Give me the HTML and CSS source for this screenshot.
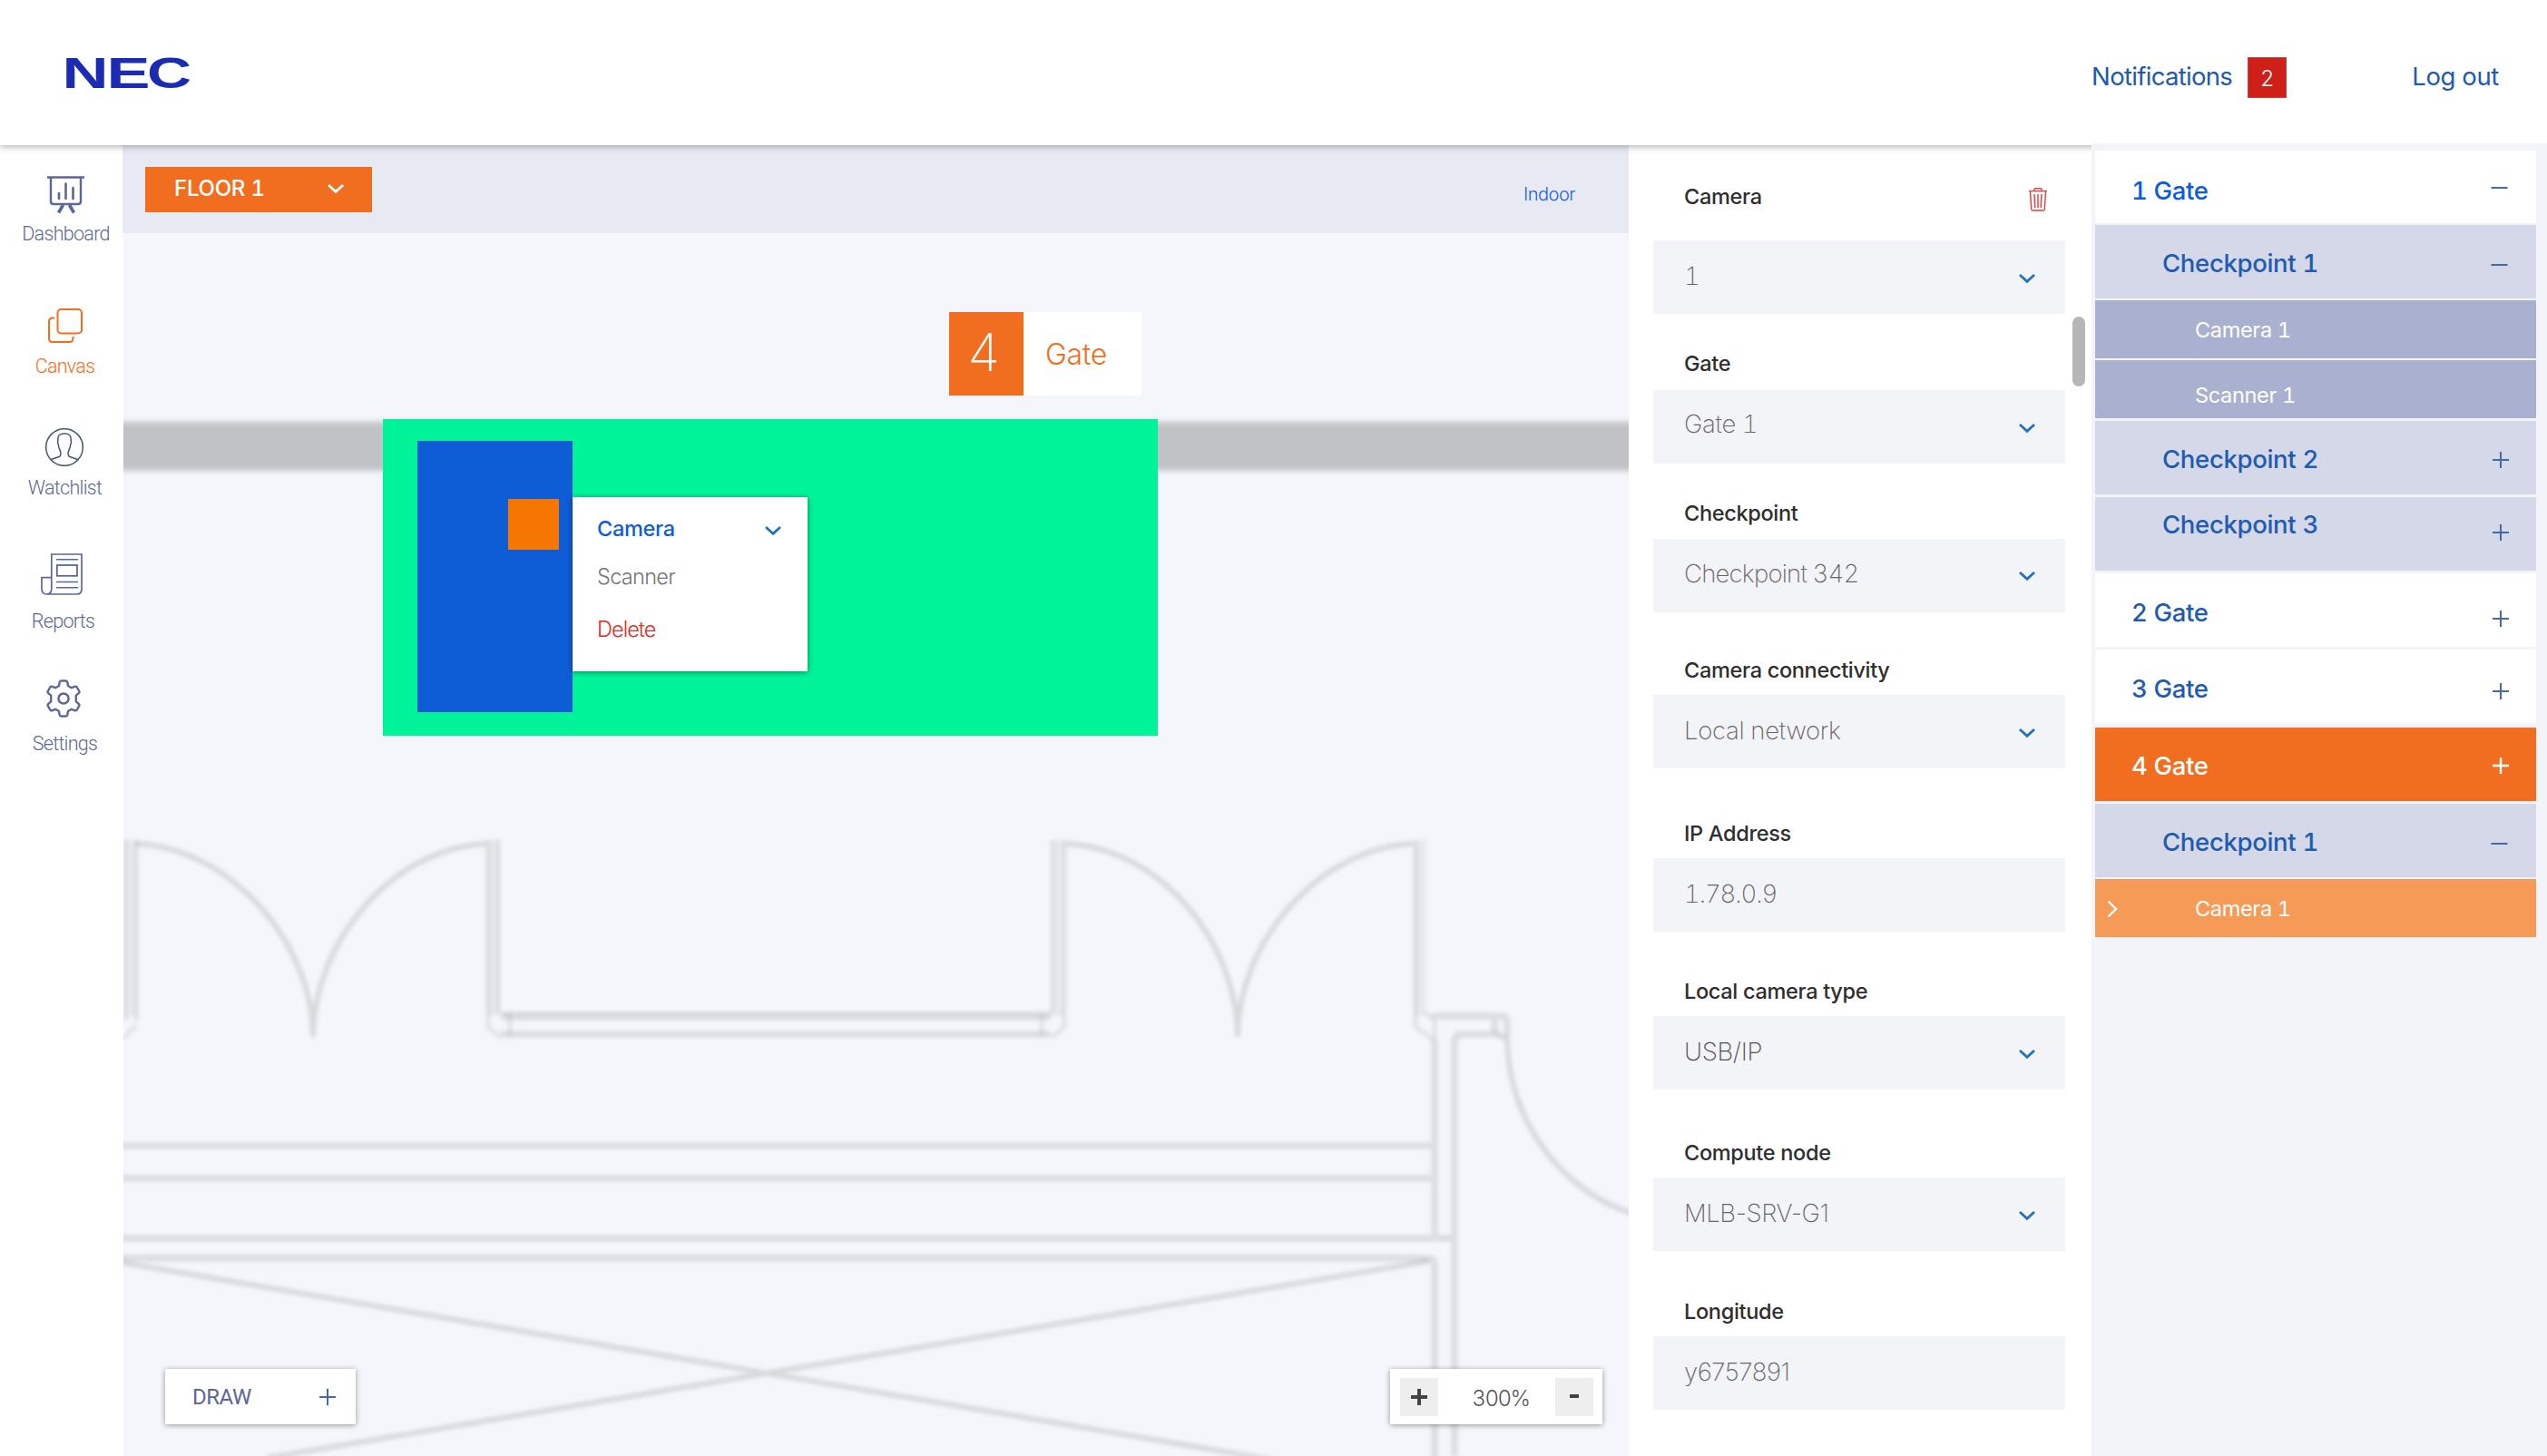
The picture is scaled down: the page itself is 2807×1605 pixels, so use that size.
FILE: index.html
```html
<!DOCTYPE html>
<html lang="en">
<head>
<meta charset="utf-8">
<title>NEC – Canvas</title>
<link rel="stylesheet" href="styles.css">
</head>
<body>
<svg class="sprite" aria-hidden="true">
  <symbol id="chevron" viewBox="0 0 20 12"><path d="M2 2l8 7.4L18 2"/></symbol>
  <symbol id="plus" viewBox="0 0 20 20"><path d="M10 1v18M1 10h18"/></symbol>
  <symbol id="minus" viewBox="0 0 20 20"><path d="M.5 10h18"/></symbol>
</svg>
<div class="app">
  <header class="header">
    <svg class="logo" viewBox="0 0 140 44" role="img" aria-label="NEC">
      <text x="-4.500" y="38.500" textLength="51" lengthAdjust="spacingAndGlyphs">N</text>
      <text x="44.500" y="38.500" textLength="48" lengthAdjust="spacingAndGlyphs">E</text>
      <text x="89" y="38.500" textLength="49" lengthAdjust="spacingAndGlyphs">C</text>
    </svg>
    <nav class="account">
      <a class="account-link notifications">Notifications</a>
      <span class="count">2</span>
      <a class="account-link logout">Log out</a>
    </nav>
  </header>

  <nav class="sidebar">
    <a class="nav-item">
      <svg class="ico" width="42" height="42" viewBox="0 0 42 42"><path d="M0 1.5h41M4 2v26q0 3 3 3h27q3 0 3-3V2" stroke-width="2.4"/><path d="M13 19v6M20.500 8.500v16.500M28.500 13v12" stroke-width="2.600" stroke-linecap="round"/><path d="M17.500 32l-5 8.500M24.500 32l5 8.500" stroke-width="3.600"/></svg>
      <span class="nav-label dash">Dashboard</span>
    </a>
    <a class="nav-item active">
      <svg class="ico" width="38" height="38" viewBox="0 0 38 38"><rect x="10.500" y="1" width="26.500" height="26.500" rx="4" stroke-width="2"/><path d="M7 10.500H5q-4 0-4 4V33q0 4 4 4h18.500q4 0 4-4v-2" stroke-width="2"/></svg>
      <span class="nav-label">Canvas</span>
    </a>
    <a class="nav-item watch">
      <svg class="ico person" width="42" height="42" viewBox="0 0 42 42"><circle cx="21" cy="21" r="20.300"/><path d="M6.500 34.500l8.500-3q2-1 2-3.500 0-2.500-1.500-5-1-2-1.200-5l-.8-2 .4-4Q13.300 6 21 6t7.100 6l.4 4-.8 2q-.2 3-1.200 5Q25 25.500 25 28q0 2.500 2 3.500l8.500 3"/></svg>
      <span class="nav-label">Watchlist</span>
    </a>
    <a class="nav-item reports">
      <svg class="ico" width="46" height="46" viewBox="0 0 46 46"><path d="M11.800 39V1H45v38q0 6-5 6H6.500Q1 45 1 39V26.700h10.800M11.800 39q0 6-5.300 6" stroke-width="1.700"/><path d="M17 6.700h24M17 31.500h24M17 37.700h24" stroke-width="1.500"/><rect x="17.800" y="13" width="22.200" height="11.800" stroke-width="1.800"/></svg>
      <span class="nav-label">Reports</span>
    </a>
    <a class="nav-item settings">
      <svg class="ico" width="42" height="42" viewBox="0 0 42 42"><path d="M16.600 3.200Q17 1.500 18.500 1.500h5q1.500 0 1.900 1.700l.6 3.800 3.800 2.200 3.500-1.400q1.600-.6 2.400.7l2.500 4.300q.7 1.300-.5 2.400l-2.900 2.400v6.800l2.900 2.400q1.200 1.100.5 2.400l-2.500 4.300q-.8 1.300-2.400.7l-3.500-1.400-3.800 2.200-.6 3.800q-.4 1.700-1.900 1.700h-5q-1.500 0-1.900-1.700L16 35l-3.800-2.200-3.500 1.400q-1.600.6-2.400-.7l-2.500-4.300q-.7-1.300.5-2.400l2.900-2.400v-6.800l-2.900-2.400q-1.200-1.100-.5-2.400l2.500-4.300q.8-1.300 2.400-.7l3.500 1.400L16 7z" stroke-width="2.400" stroke-linejoin="round"/><circle cx="21" cy="21" r="5.600" stroke-width="2.500"/></svg>
      <span class="nav-label">Settings</span>
    </a>
  </nav>

  <main class="stage">
    <div class="toolbar">
      <button class="floor">FLOOR 1<svg class="chev" width="20" height="12"><use href="#chevron"/></svg></button>
      <a class="indoor">Indoor</a>
    </div>
    <div class="canvas">
      <svg class="plan" viewBox="135 257 1660 1348" aria-hidden="true">
        <path class="wall-solid" d="M120 492h1700"/>
        <g class="lines">
          <path d="M120 1263h1461M120 1299h1461M120 1365h1483M120 1387h1455q6 0 6 7v230M1581 1145v220M1603 1605v-457q0-8 8-8h40"/>
          <path d="M552 1140h606M552 1121h606" />
          <path class="thin" d="M552 1117h606"/>
          <path class="post" d="M144 926v194M543.500 926v194M1166.500 926v194M1565 926v194"/>
          <path class="thin" d="M138 926v200M150 926v200M538 926v206l14 12M549 926v190M1160 926v192M1173 926v206l-14 12M1560 926v206l20 14M1571 1116l10 10v20M150 1130l-14 15M562 1118v24M1148 1118v24"/>
          <path class="arc" d="M150 930C255 935 345 1040 345 1143M536 930C431 935 345 1040 345 1143M1175 930C1280 935 1364 1040 1364 1143M1557 930C1452 935 1364 1040 1364 1143"/>
          <path d="M1578 1120h76q7 0 7 7v16M1647 1120v18"/>
          <path class="arc" d="M1650 1140l11 6C1663 1240 1725 1315 1800 1338"/>
          <path class="arc" d="M130 1391L1400 1609M1575 1390L295 1607"/>
        </g>
      </svg>
      <div class="zone"></div>
      <div class="checkpoint"></div>
      <div class="device"></div>
      <div class="tag"><span class="tag-no">4</span><span class="tag-name">Gate</span></div>
      <div class="menu">
        <div class="menu-head">Camera<svg class="chev" width="20" height="12"><use href="#chevron"/></svg></div>
        <div class="menu-item">Scanner</div>
        <div class="menu-item delete">Delete</div>
      </div>
      <button class="draw">DRAW<svg class="sign" width="20" height="20"><use href="#plus"/></svg></button>
      <div class="zoom">
        <button class="zoom-btn"><svg width="18" height="18" viewBox="0 0 18 18"><path d="M9 0v18M0 9h18"/></svg></button>
        <span class="zoom-value">300%</span>
        <button class="zoom-btn"><svg width="10" height="18" viewBox="0 0 10 18"><path d="M0 8h10"/></svg></button>
      </div>
    </div>
  </main>

  <section class="form">
    <div class="field first">
      <div class="label">Camera<svg class="trash" width="20" height="26" viewBox="0 0 20 26"><path d="M0 3.600h20M6 3.500V1.800Q6 .8 7 .8h6q1 0 1 1v1.700M1.500 4l1.200 19.500q.1 1.500 1.500 1.500h11.600q1.400 0 1.500-1.500L18.500 4M6 7l.8 15M10 7v15M14 7l-.8 15"/></svg></div>
      <div class="box"><span>1</span><svg class="chev" width="20" height="12"><use href="#chevron"/></svg></div>
    </div>
    <div class="field second">
      <div class="label">Gate</div>
      <div class="box"><span>Gate 1</span><svg class="chev" width="20" height="12"><use href="#chevron"/></svg></div>
    </div>
    <div class="field third">
      <div class="label">Checkpoint</div>
      <div class="box tight"><span>Checkpoint 342</span><svg class="chev" width="20" height="12"><use href="#chevron"/></svg></div>
    </div>
    <div class="field">
      <div class="label">Camera connectivity</div>
      <div class="box"><span>Local network</span><svg class="chev" width="20" height="12"><use href="#chevron"/></svg></div>
    </div>
    <div class="field">
      <div class="label">IP Address</div>
      <div class="box"><span class="ip">1.78.0.9</span></div>
    </div>
    <div class="field">
      <div class="label">Local camera type</div>
      <div class="box dark"><span>USB/IP</span><svg class="chev" width="20" height="12"><use href="#chevron"/></svg></div>
    </div>
    <div class="field">
      <div class="label">Compute node</div>
      <div class="box"><span class="code">MLB-SRV-G1</span><svg class="chev" width="20" height="12"><use href="#chevron"/></svg></div>
    </div>
    <div class="field">
      <div class="label">Longitude</div>
      <div class="box"><span class="code">y6757891</span></div>
    </div>
    <div class="scrollbar"></div>
  </section>

  <aside class="tree">
    <div class="row gate bright open">1 Gate<svg class="sign up" width="20" height="20"><use href="#minus"/></svg></div>
    <div class="row point">Checkpoint 1<svg class="sign low" width="20" height="20"><use href="#minus"/></svg></div>
    <div class="row leaf">Camera 1</div>
    <div class="row leaf scanner">Scanner 1</div>
    <div class="row point">Checkpoint 2<svg class="sign" width="20" height="20"><use href="#plus"/></svg></div>
    <div class="row point raised">Checkpoint 3<svg class="sign" width="20" height="20"><use href="#plus"/></svg></div>
    <div class="row gate">2 Gate<svg class="sign lowest" width="20" height="20"><use href="#plus"/></svg></div>
    <div class="row gate">3 Gate<svg class="sign low" width="20" height="20"><use href="#plus"/></svg></div>
    <div class="row gate current">4 Gate<svg class="sign" width="20" height="20"><use href="#plus"/></svg></div>
    <div class="row point">Checkpoint 1<svg class="sign low" width="20" height="20"><use href="#minus"/></svg></div>
    <div class="row leaf selected"><svg class="pointer" width="12" height="20" viewBox="0 0 12 20"><path d="M1.500 1.500L10 10l-8.500 8.500"/></svg>Camera 1</div>
  </aside>
</div>
</body>
</html>
```

FILE: styles.css
```css
* { box-sizing: border-box; }

body {
  margin: 0;
  background: #fff;
  font-family: Inter, "Liberation Sans", sans-serif;
  font-variant-numeric: tabular-nums;
  letter-spacing: -0.02em;
}

button {
  border: 0;
  padding: 0;
  font: inherit;
  letter-spacing: inherit;
}

svg { fill: none; stroke: currentColor; flex: none; }

.sprite { display: none; }

.app {
  display: grid;
  grid-template-columns: 135px 1660px 510px 502px;
  grid-template-rows: 158px 2px 1445px;
  width: 2807px;
  height: 1605px;
  overflow: hidden;
}

/* Header */
.header {
  grid-area: 1 / 1 / 3 / 5;
  display: flex;
  justify-content: space-between;
  padding: 58px 53px 0 73px;
  background: #fff;
  box-shadow: 0 1px 8px rgba(40, 40, 60, .42);
  z-index: 1;
}

.logo {
  width: 140px;
  height: 44px;
  overflow: visible;
  stroke: none;
  fill: #1b2bb4;
  font: bold 49px "Liberation Sans", sans-serif;
  letter-spacing: 0;
}

.account { display: flex; align-items: flex-start; }

.account-link {
  margin-top: 9px;
  font-size: 27.5px;
  line-height: 34px;
  color: #2059ae;
}

.notifications { letter-spacing: -.025em; }

.count {
  width: 43px;
  height: 45px;
  margin: 5px 138px 0 17px;
  border: 1px solid #dc3a32;
  background: #cf1f19;
  color: #fff;
  font-size: 24px;
  font-weight: 300;
  line-height: 45px;
  text-align: center;
}

/* Sidebar */
.sidebar {
  grid-area: 3 / 1;
  display: grid;
  grid-template-rows: 147px 141px 142px 138px 140px;
  color: #5b6798;
}

.nav-item {
  display: flex;
  flex-direction: column;
  align-items: center;
  justify-content: flex-end;
  padding-left: 8px;
}

.nav-label {
  margin-top: 13px;
  font: 300 21.500px/26px Roboto, sans-serif;
  letter-spacing: -.7px;
  height: 62px;
}

.dash { margin-top: 9px; }
.active { color: #f16e20; }
.nav-item:nth-child(1) { padding-left: 10px; }
.nav-item:nth-child(1) .nav-label { height: 62px; }
.nav-item:nth-child(2) .nav-label { height: 57px; }
.nav-item:nth-child(3) .nav-label { height: 65px; margin-top: 11px; }
.nav-item:nth-child(4) .nav-label { height: 56px; margin-top: 16px; }
.nav-item:nth-child(5) .nav-label { height: 61px; margin-top: 16px; }
.nav-item.reports { padding-left: 4px; }
.reports .ico { margin-right: 3px; }
.settings .ico { margin-right: 3px; }
.watch .ico { margin-right: 1px; }
.person { stroke: #455a66; stroke-width: 1.500; }

/* Stage */
.stage {
  grid-area: 3 / 2;
  display: flex;
  flex-direction: column;
  overflow: hidden;
}

.toolbar {
  display: flex;
  justify-content: space-between;
  height: 97px;
  padding: 24px 59px 0 25px;
  background: #e8eaf3;
}

.floor {
  display: flex;
  align-items: center;
  justify-content: space-between;
  width: 250px;
  height: 50px;
  padding: 0 30px 3px 32px;
  background: #f16e20;
  color: #fff;
  font-size: 24px;
  font-weight: 500;
  letter-spacing: -.01em;
}

.indoor {
  margin-top: 17px;
  color: #1d5fe0;
  font-size: 20px;
  font-weight: 300;
  line-height: 26px;
  letter-spacing: -.025em;
}

.chev { stroke: #2273b8; stroke-width: 2.800; }
.floor .chev { stroke: #fff; }

.canvas {
  position: relative;
  flex: 1;
  margin-left: 1px;
  background: #f4f6fb;
  overflow: hidden;
}

.plan {
  position: absolute;
  left: -1px;
  top: 0;
  width: 1660px;
  height: 1348px;
}

.wall-solid { stroke: #c1c2c6; stroke-width: 54; filter: blur(3px); }
.lines { stroke: rgba(70, 70, 70, .135); stroke-width: 7.500; filter: blur(2px); }
.lines .post { stroke-width: 13; stroke: rgba(70, 70, 70, .07); }
.lines .thin { stroke-width: 5; stroke: rgba(70, 70, 70, .1); }
.lines .arc { stroke-width: 6; stroke: rgba(70, 70, 70, .16); }

.zone, .checkpoint, .device, .tag, .menu, .draw, .zoom { position: absolute; }

.zone { left: 286px; top: 205px; width: 854px; height: 349px; background: #00f399; }
.checkpoint { left: 324px; top: 229px; width: 171px; height: 299px; background: #0f5cd7; }
.device { left: 424px; top: 293px; width: 56px; height: 56px; background: #f57600; }

.tag {
  left: 910px;
  top: 87px;
  display: flex;
  width: 212px;
  height: 92px;
  background: #fff;
  color: #f16e20;
}

.tag-no {
  width: 82px;
  padding-right: 6px;
  background: #f16e20;
  color: #fff;
  font-size: 58px;
  font-weight: 200;
  line-height: 88px;
  text-align: center;
}

.tag-name { margin-left: 24px; font-size: 32px; font-weight: 300; line-height: 93px; }

.menu {
  left: 495px;
  top: 291px;
  width: 259px;
  height: 192px;
  padding: 20px 28px 0 27px;
  background: #fff;
  box-shadow: 0 1px 6px rgba(0, 0, 0, .45);
  color: #757575;
  font-size: 23.5px;
  font-weight: 300;
  line-height: 30px;
}

.menu-head {
  display: flex;
  justify-content: space-between;
  align-items: center;
  color: #0f5cd7;
  font-weight: 500;
}

.menu-head .chev { margin-top: 4px; }
.menu-item { margin-top: 23px; letter-spacing: -.03em; }
.delete { margin-top: 28px; color: #e02b27; letter-spacing: -.04em; }

.draw, .zoom {
  top: 1252px;
  height: 61px;
  display: flex;
  align-items: center;
  background: #fff;
  box-shadow: 0 1px 6px rgba(0, 0, 0, .4);
}

.draw {
  left: 46px;
  width: 210px;
  padding: 0 21px 0 30px;
  justify-content: space-between;
  color: #5b6798;
  font: 400 24px Roboto, sans-serif;
  letter-spacing: -.5px;
}

.sign { stroke: #4668a3; stroke-width: 2; }

.zoom {
  left: 1396px;
  width: 234px;
  padding: 0 10px 0 11px;
  justify-content: space-between;
}

.zoom-btn {
  display: flex;
  align-items: center;
  justify-content: center;
  width: 42px;
  height: 42px;
  background: #eee;
  color: #444;
}

.zoom-btn svg { stroke-width: 4; }
.zoom-value { color: #555; font-size: 24px; font-weight: 300; padding: 3px 0 0 9px; letter-spacing: -.06em; }

/* Form */
.form {
  grid-area: 3 / 3;
  position: relative;
  display: grid;
  grid-template-rows: 186px 165px 164px 172px 180px 174px 178px 175px;
  padding: 0 29px 0 27px;
}

.field { display: flex; flex-direction: column; justify-content: flex-end; }

.label {
  display: flex;
  justify-content: space-between;
  margin-bottom: 12px;
  padding: 0 20px 0 34px;
  color: #2e2e2e;
  font-size: 23.5px;
  font-weight: 500;
  line-height: 30px;
}

.first .label { margin-bottom: 32px; }
.second .label { margin-bottom: 14px; }
.third .label { margin-bottom: 13px; }
.trash { margin-top: 5px; stroke: #e53b3a; stroke-width: 1.400; }

.box {
  display: flex;
  align-items: center;
  justify-content: space-between;
  height: 81px;
  padding: 0 32px 4px 34px;
  background: #f3f4f8;
  color: #666;
  font-size: 27.500px;
  font-weight: 250;
}

.box .chev { margin-top: 6px; }
.tight { letter-spacing: -.029em; padding-bottom: 6px; }
.ip { letter-spacing: -.04em; }
.code { font-variant-numeric: normal; letter-spacing: -.015em; }
.second .box { padding-bottom: 7px; }
.second .chev { margin-top: 9px; }
.dark { color: #505050; padding-bottom: 3px; }
.dark .chev { margin-top: 5px; }

.scrollbar {
  position: absolute;
  left: 489px;
  top: 189px;
  width: 14px;
  height: 77px;
  border-radius: 7px;
  background: #b6b6b6;
}

/* Tree */
.tree {
  grid-area: 2 / 4 / 4 / 5;
  display: grid;
  grid-template-rows: 80px 81px 64px 65px 82px 82px 82px 84px 82px 81px 64px;
  row-gap: 2px;
  align-content: start;
  padding: 8px 12px 0 4px;
  background: #f3f4fa;
  z-index: 2;
}

.row {
  display: flex;
  align-items: center;
  justify-content: space-between;
  height: 81px;
  padding: 4px 29px 0 40px;
  background: #fff;
  color: #1f5bb2;
  font-size: 27.500px;
  font-weight: 500;
}

.bright { color: #0d5be0; }
.open { height: 80px; padding-top: 8px; }
.point { padding-top: 3px; padding-left: 74px; background: #d5d8e9; }
.raised { padding-top: 0; padding-bottom: 22px; }

.leaf {
  height: 64px;
  padding: 1px 0 0 110px;
  justify-content: flex-start;
  background: #aab1d0;
  color: #fff;
  font-size: 23.500px;
  font-weight: 400;
}

.scanner { padding-top: 13px; }
.current { background: #f16e20; color: #fff; padding-top: 2px; }
.current .sign { stroke: #fff; stroke-width: 2.400; }
.selected { background: #f69b57; padding-left: 13px; }
.pointer { margin-right: 85px; stroke-width: 2.400; }

.row .sign { align-self: flex-start; margin-top: 30px; }
.row .up { margin-top: 23px; }
.row .low { margin-top: 32px; }
.row .lowest { margin-top: 36px; }
.row.raised .sign { margin-top: 29px; }
.open .sign, .point .low { margin-right: 1px; }
.point .low { margin-top: 31px; }
```
